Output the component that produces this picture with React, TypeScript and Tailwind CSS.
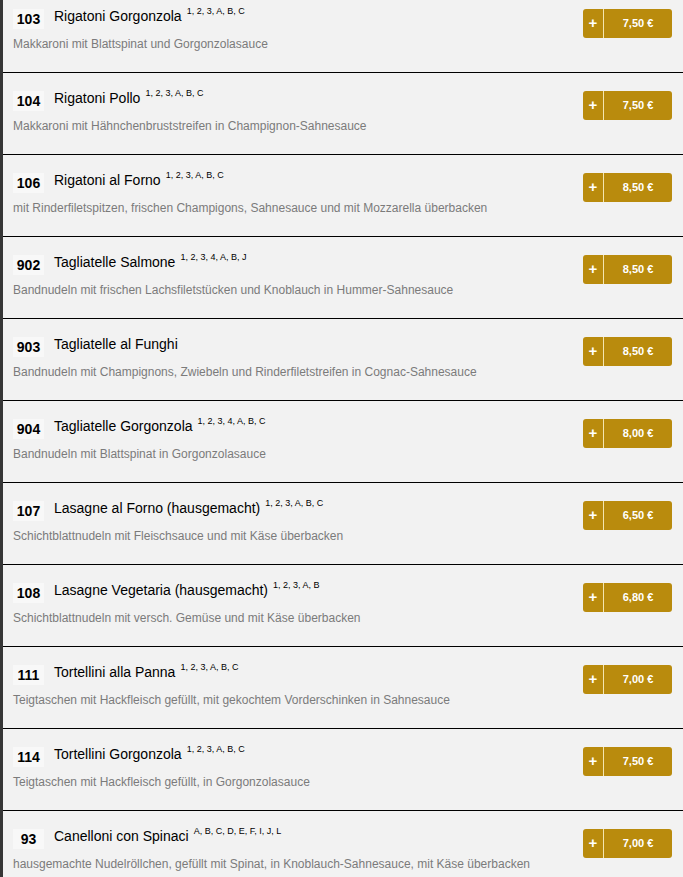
import React from "react";

type Dish = {
  nr: string;
  name: string;
  tags?: string;
  desc: string;
  price: string;
};

const dishes: Dish[] = [
  { nr: "103", name: "Rigatoni Gorgonzola", tags: "1, 2, 3, A, B, C", desc: "Makkaroni mit Blattspinat und Gorgonzolasauce", price: "7,50 €" },
  { nr: "104", name: "Rigatoni Pollo", tags: "1, 2, 3, A, B, C", desc: "Makkaroni mit Hähnchenbruststreifen in Champignon-Sahnesauce", price: "7,50 €" },
  { nr: "106", name: "Rigatoni al Forno", tags: "1, 2, 3, A, B, C", desc: "mit Rinderfiletspitzen, frischen Champigons, Sahnesauce und mit Mozzarella überbacken", price: "8,50 €" },
  { nr: "902", name: "Tagliatelle Salmone", tags: "1, 2, 3, 4, A, B, J", desc: "Bandnudeln mit frischen Lachsfiletstücken und Knoblauch in Hummer-Sahnesauce", price: "8,50 €" },
  { nr: "903", name: "Tagliatelle al Funghi", desc: "Bandnudeln mit Champignons, Zwiebeln und Rinderfiletstreifen in Cognac-Sahnesauce", price: "8,50 €" },
  { nr: "904", name: "Tagliatelle Gorgonzola", tags: "1, 2, 3, 4, A, B, C", desc: "Bandnudeln mit Blattspinat in Gorgonzolasauce", price: "8,00 €" },
  { nr: "107", name: "Lasagne al Forno (hausgemacht)", tags: "1, 2, 3, A, B, C", desc: "Schichtblattnudeln mit Fleischsauce und mit Käse überbacken", price: "6,50 €" },
  { nr: "108", name: "Lasagne Vegetaria (hausgemacht)", tags: "1, 2, 3, A, B", desc: "Schichtblattnudeln mit versch. Gemüse und mit Käse überbacken", price: "6,80 €" },
  { nr: "111", name: "Tortellini alla Panna", tags: "1, 2, 3, A, B, C", desc: "Teigtaschen mit Hackfleisch gefüllt, mit gekochtem Vorderschinken in Sahnesauce", price: "7,00 €" },
  { nr: "114", name: "Tortellini Gorgonzola", tags: "1, 2, 3, A, B, C", desc: "Teigtaschen mit Hackfleisch gefüllt, in Gorgonzolasauce", price: "7,50 €" },
  { nr: "93", name: "Canelloni con Spinaci", tags: "A, B, C, D, E, F, I, J, L", desc: "hausgemachte Nudelröllchen, gefüllt mit Spinat, in Knoblauch-Sahnesauce, mit Käse überbacken", price: "7,00 €" },
];

const DishRow = ({ dish }: { dish: Dish }) => (
  <div className="flex h-[82px] border-b border-black">
    <div className="flex-1 pl-[10px] pt-[17px]">
      <div className="flex items-start">
        <span className="mt-[1px] w-[31px] bg-[#f8f8f8] text-center text-[14px] font-bold leading-[20px] text-black">
          {dish.nr}
        </span>
        <span className="ml-[10px] text-[14px] leading-[17px] text-black">
          {dish.name}
          {dish.tags && <sup className="relative -top-[1px] ml-[5px] align-top text-[9px] leading-none">{dish.tags}</sup>}
        </span>
      </div>
      <div className="mt-[8px] text-[12px] leading-[15px] text-[#7b7b7b]">{dish.desc}</div>
    </div>
    <div className="pr-[11px] pt-[18px]">
      <button className="flex h-[29px] w-[89px] items-stretch overflow-hidden rounded-[3px] bg-[#b98b0d] text-white">
        <span className="flex w-[21px] items-center justify-center border-r border-[#f5e6b0] text-[15px] font-bold">+</span>
        <span className="flex flex-1 items-center justify-center text-[11px] font-bold">{dish.price}</span>
      </button>
    </div>
  </div>
);

export default function App() {
  return (
    <div className="h-[877px] overflow-hidden border-l-[3px] border-[#363636] bg-[#f2f2f2] font-['Liberation_Sans',Arial,sans-serif]">
      <div className="-mt-[9px]">
        {dishes.map((d) => (
          <DishRow key={d.nr} dish={d} />
        ))}
      </div>
    </div>
  );
}
